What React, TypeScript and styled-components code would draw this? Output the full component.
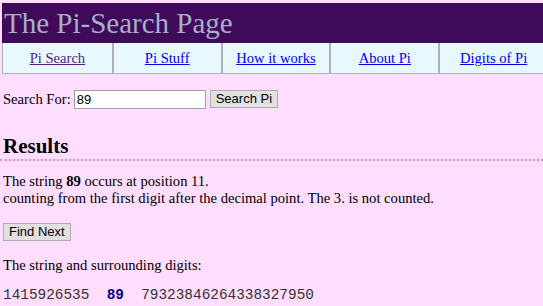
import React from 'react';
import styled, { createGlobalStyle } from 'styled-components';

const GlobalStyle = createGlobalStyle`
  html, body {
    margin: 0;
    padding: 0;
    background: #ffddff;
    overflow: hidden;
  }
  body {
    font-family: "Liberation Serif", "Times New Roman", serif;
    font-size: 14.6px;
    color: #000;
  }
`;

const Page = styled.div`
  width: 546px;
  margin: 3px 0 0 2px;
`;

const Banner = styled.div`
  background: #400a5a;
  color: #a8b0c8;
  font-size: 29px;
  height: 40px;
  line-height: 40px;
  padding-left: 2px;
`;

const NavBar = styled.div`
  display: grid;
  grid-template-columns: repeat(5, 1fr);
  background: #e8f8ff;
  border: 1px solid #b0b0b0;
  border-top: none;
  height: 30px;
`;

const NavCell = styled.div`
  display: flex;
  align-items: center;
  justify-content: center;
  border-left: 2px solid #b0b0b0;
  &:first-child {
    border-left: none;
  }
`;

const NavLink = styled.a<{ $visited?: boolean }>`
  color: ${(p) => (p.$visited ? '#551a8b' : '#0000ee')};
  text-decoration: underline;
`;

const Content = styled.div`
  padding: 0 1px;
`;

const SearchRow = styled.div`
  display: flex;
  align-items: center;
  margin-top: 15px;
  height: 20px;
`;

const Label = styled.span`
  margin-right: 3px;
`;

const TextInput = styled.input`
  width: 132px;
  height: 19px;
  box-sizing: border-box;
  border: 1px solid #a0a0a0;
  padding: 0 2px;
  font-family: "Liberation Sans", Arial, sans-serif;
  font-size: 13px;
  background: #fff;
  margin: 0 4px 0 0;
`;

const Button = styled.button`
  font-family: "Liberation Sans", Arial, sans-serif;
  font-size: 13px;
  height: 18px;
  padding: 0 5px;
  background: #e1e1e1;
  border: 1px solid #adadad;
  color: #000;
  line-height: 16px;
`;

const Heading = styled.h2`
  font-size: 21px;
  font-weight: bold;
  margin: 25px 0 0 -3px;
  padding: 0 0 0 3px;
  border-bottom: 2px dotted #ff88aa;
`;

const Para = styled.p<{ $gap?: number }>`
  margin: ${(p) => p.$gap ?? 14}px 0 0;
  line-height: 17px;
`;

const Digits = styled.div`
  font-family: "Liberation Mono", "Courier New", monospace;
  font-size: 14.4px;
  color: #333;
  margin-top: 13px;
  white-space: pre;
`;

const Hit = styled.b`
  color: #000080;
`;

const navItems = ['Pi Search', 'Pi Stuff', 'How it works', 'About Pi', 'Digits of Pi'];

export default function App() {
  return (
    <>
      <GlobalStyle />
      <Page>
        <Banner>The Pi-Search Page</Banner>
        <NavBar>
          {navItems.map((item, i) => (
            <NavCell key={item}>
              <NavLink href="#" $visited={i === 0}>{item}</NavLink>
            </NavCell>
          ))}
        </NavBar>
        <Content>
          <SearchRow>
            <Label>Search For:</Label>
            <TextInput defaultValue="89" />
            <Button>Search Pi</Button>
          </SearchRow>
          <Heading>Results</Heading>
          <Para $gap={12}>
            The string <b>89</b> occurs at position 11.
            <br />
            counting from the first digit after the decimal point. The 3. is not counted.
          </Para>
          <Para $gap={16}>
            <Button>Find Next</Button>
          </Para>
          <Para $gap={16}>The string and surrounding digits:</Para>
          <Digits>
            1415926535  <Hit>89</Hit>  79323846264338327950
          </Digits>
        </Content>
      </Page>
    </>
  );
}
